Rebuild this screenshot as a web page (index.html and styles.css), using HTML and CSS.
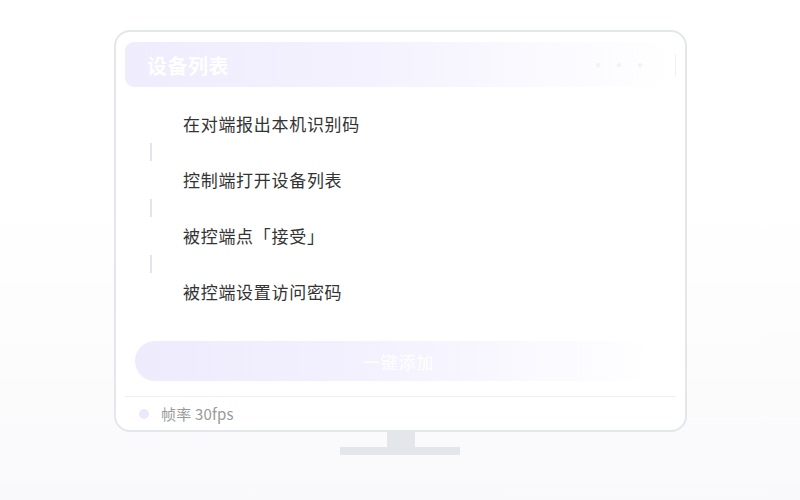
FILE: index.html
```html
<!DOCTYPE html>
<html lang="zh">
<head>
<meta charset="utf-8">
<link rel="stylesheet" href="styles.css">
</head>
<body>
<div class="stage">
  <div class="monitor">
    <div class="screen">
      <div class="header">
        <span class="title">设备列表</span>
        <span class="more">···</span>
      </div>
      <div class="steps">
        <div class="step">在对端报出本机识别码</div>
        <div class="conn"></div>
        <div class="step">控制端打开设备列表</div>
        <div class="conn"></div>
        <div class="step">被控端点「接受」</div>
        <div class="conn"></div>
        <div class="step">被控端设置访问密码</div>
      </div>
      <div class="btn">一键添加</div>
      <div class="footer">
        <span class="dot"></span>
        <span class="fps">帧率 30fps</span>
      </div>
    </div>
  </div>
  <div class="neck"></div>
  <div class="base"></div>
</div>
</body>
</html>
```

FILE: styles.css
```css
* { box-sizing: border-box; }
html, body { margin: 0; padding: 0; }
body {
  width: 800px;
  height: 500px;
  background: linear-gradient(#ffffff 0%, #ffffff 40%, #f9f9fb 100%);
  font-family: "Noto Sans CJK SC", "Noto Sans", sans-serif;
  overflow: hidden;
}
.stage {
  padding-top: 30px;
  display: flex;
  flex-direction: column;
  align-items: center;
}
.monitor {
  width: 573px;
  height: 402px;
  margin-left: 1px;
  border: 2px solid #e3e6ea;
  border-radius: 16px;
  background: #ffffff;
  padding: 10px 9px 0 9px;
}
.screen {
  display: flex;
  flex-direction: column;
}
.header {
  height: 45px;
  border-radius: 9px;
  background: linear-gradient(90deg, #efecfd 0%, #f4f2fe 45%, #fbfbff 80%, #ffffff 100%);
  display: flex;
  align-items: center;
  justify-content: space-between;
  padding: 0 0 0 22px;
}
.title {
  color: #ffffff;
  font-size: 20px;
  font-weight: 700;
  line-height: 1;
  margin-top: 2px;
  letter-spacing: 0.5px;
}
.more {
  color: #f3f3f7;
  font-size: 20px;
  padding-right: 24px;
  border-right: 1px solid #f0f0f4;
  line-height: 22px;
  letter-spacing: 1px;
}
.steps {
  display: flex;
  flex-direction: column;
  padding: 26px 0 0 24px;
}
.step {
  font-size: 17px;
  color: #333333;
  line-height: 22px;
  padding-left: 34px;
  letter-spacing: 0.7px;
}
.conn {
  width: 2px;
  height: 18px;
  background: #e4e4ec;
  margin: 8px 0 8px 1px;
}
.btn {
  margin: 38px 24px 0 10px;
  height: 40px;
  border-radius: 20px;
  background: linear-gradient(90deg, #eeebfd 0%, #f3f1fe 45%, #fafaff 80%, #ffffff 100%);
  color: #ffffff;
  font-size: 17px;
  letter-spacing: 1px;
  display: flex;
  align-items: center;
  justify-content: center;
  padding-left: 10px;
}
.footer {
  margin-top: 15px;
  border-top: 1px solid #eeeff2;
  display: flex;
  align-items: center;
  height: 34px;
  padding-left: 14px;
}
.dot {
  width: 10px;
  height: 10px;
  border-radius: 50%;
  background: #ebe8fb;
  margin-right: 12px;
}
.fps {
  font-size: 15px;
  color: #999999;
  letter-spacing: 0.2px;
}
.neck {
  width: 28px;
  height: 15px;
  background: #e3e6ea;
  margin-left: 1px;
}
.base {
  width: 120px;
  height: 8px;
  background: #e3e6ea;
}
```
